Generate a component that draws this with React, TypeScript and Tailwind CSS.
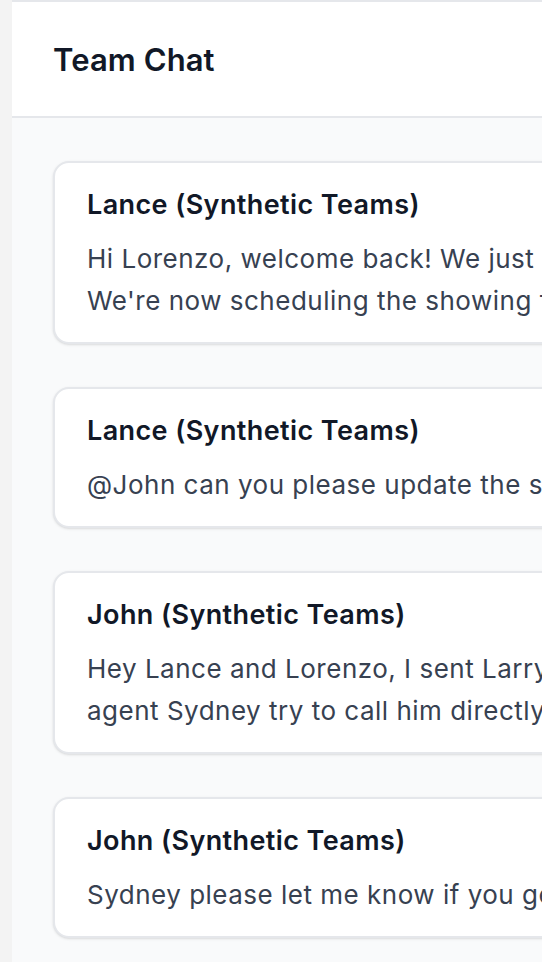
import React from "react";

const messages: { author: string; lines: string[] }[] = [
  {
    author: "Lance (Synthetic Teams)",
    lines: [
      "Hi Lorenzo, welcome back! We just heard back from the seller's agent about the property.",
      "We're now scheduling the showing for this weekend and will confirm the time shortly.",
    ],
  },
  {
    author: "Lance (Synthetic Teams)",
    lines: ["@John can you please update the schedule once the seller confirms?"],
  },
  {
    author: "John (Synthetic Teams)",
    lines: [
      "Hey Lance and Lorenzo, I sent Larry a message this morning but haven't heard back. I'll have our",
      "agent Sydney try to call him directly this afternoon.",
    ],
  },
  {
    author: "John (Synthetic Teams)",
    lines: ["Sydney please let me know if you get through to him."],
  },
];

export default function App() {
  return (
    <div className="w-[542px] h-[962px] overflow-hidden bg-[#f3f3f3] flex pl-[12px] font-['Inter','Liberation_Sans',sans-serif]">
      <div className="w-[1100px] shrink-0 bg-white border-t-2 border-[#e5e7eb] flex flex-col">
        <div className="h-[116px] shrink-0 flex items-center px-[41px] border-b-2 border-[#e5e7eb]">
          <h1 className="text-[31px] leading-[38px] font-semibold text-[#111827] tracking-[0.1px] translate-y-[1px]">
            Team Chat
          </h1>
        </div>
        <div className="flex-1 bg-[#f9fafb] px-[41px] pt-[43px] flex flex-col gap-[43px]">
          {messages.map((m, i) => (
            <div
              key={i}
              className="bg-white border-2 border-[#e5e7eb] rounded-[16px] shadow-sm px-[32px] pt-[25px] pb-[20px]"
            >
              <div className="text-[27px] leading-[34px] font-semibold text-[#111827] tracking-[0.4px]">
                {m.author}
              </div>
              <div className="mt-[16px] text-[26px] leading-[42px] text-[#374151] tracking-[0.5px]">
                {m.lines.map((l, j) => (
                  <div key={j} className="whitespace-nowrap">
                    {l}
                  </div>
                ))}
              </div>
            </div>
          ))}
        </div>
      </div>
    </div>
  );
}
